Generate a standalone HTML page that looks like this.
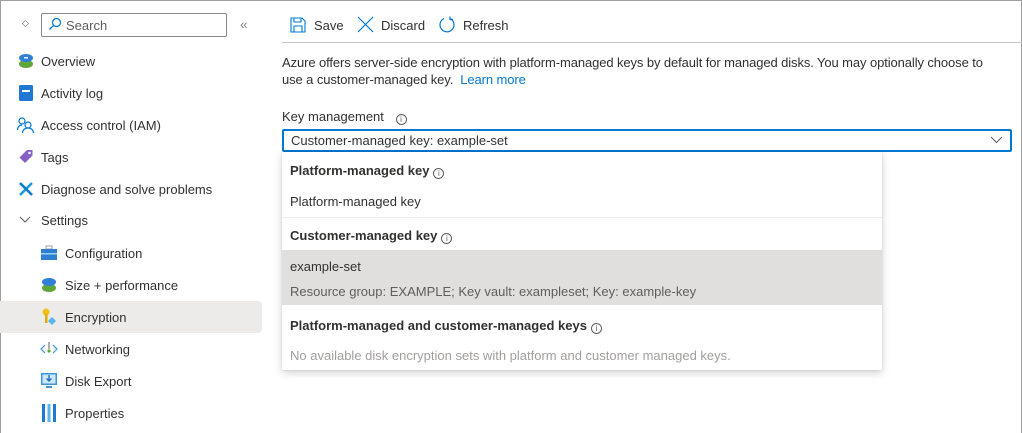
<!DOCTYPE html>
<html><head><meta charset="utf-8"><style>
*{box-sizing:border-box;margin:0;padding:0}
body{width:1022px;height:433px;overflow:hidden;background:#fff;font-family:"Liberation Sans",Arial,sans-serif;font-size:13px;color:#323130;position:relative}
.frame{position:absolute;left:0;top:0;width:1022px;height:433px;border:1px solid #a19f9d;border-bottom:none}
.a{position:absolute;white-space:nowrap}
.ic{position:absolute}
.nav{position:absolute;left:0;height:32px;line-height:34px;white-space:nowrap}
.sel{background:#edebe9;border-radius:0 4px 4px 0}
.b{font-weight:bold}
.info{display:inline-block;width:11px;height:11px;border:1px solid #605e5c;border-radius:50%;font-size:8px;line-height:9px;text-align:center;color:#605e5c;vertical-align:-1px;margin-left:4px;font-weight:normal}
</style></head><body>
<div class="frame"></div>
<div class="a" style="left:22px;top:18px;font-size:9px;color:#605e5c">◇</div>
<div class="a" style="left:41px;top:13px;width:186px;height:24px;border:1px solid #8a8886;border-radius:2px"></div>
<svg class="ic" style="left:48px;top:17px" width="14" height="14" viewBox="0 0 14 14"><circle cx="8.5" cy="5.5" r="4" fill="none" stroke="#0078d4" stroke-width="1.2"/><path d="M5.6 8.4L1.5 12.5" stroke="#0078d4" stroke-width="1.3"/></svg>
<div class="a" style="left:66px;top:18px;color:#605e5c">Search</div>
<div class="a" style="left:240px;top:16px;color:#8a8886;font-size:14px">«</div>

<svg class="ic" style="left:18px;top:53px" width="16" height="16"><ellipse cx="8" cy="11" rx="7" ry="4" fill="#5ea53a"/><ellipse cx="8" cy="5" rx="7" ry="4" fill="#2f7fd6"/><rect x="6" y="4" width="4" height="1.5" fill="#fff"/></svg>
<div class="nav" style="top:45px;left:41px">Overview</div>
<svg class="ic" style="left:18px;top:85px" width="16" height="16"><rect x="1" y="0" width="14" height="16" rx="1.5" fill="#1f78d1"/><rect x="4" y="5" width="8" height="2" fill="#fff"/></svg>
<div class="nav" style="top:77px;left:41px">Activity log</div>
<svg class="ic" style="left:17px;top:117px" width="18" height="16" fill="none" stroke="#0078d4" stroke-width="1.2"><circle cx="5" cy="4" r="3"/><path d="M0.5 13c0-3 2-5 4.5-5"/><circle cx="11" cy="8" r="3"/><path d="M5.5 16c0-3 2.5-5 5.5-5s5.5 2 5.5 5"/></svg>
<div class="nav" style="top:109px;left:41px">Access control (IAM)</div>
<svg class="ic" style="left:18px;top:149px" width="16" height="16"><path d="M9 1h5.5v5.5L7 14 1.5 8.5z" fill="#8661c5"/><circle cx="11.5" cy="4" r="1.3" fill="#fff"/></svg>
<div class="nav" style="top:141px;left:41px">Tags</div>
<svg class="ic" style="left:18px;top:181px" width="16" height="16" stroke-width="2.6"><path d="M2 14L14 2" stroke="#1f9ad6"/><path d="M2 2L14 14" stroke="#0a7cc8"/></svg>
<div class="nav" style="top:173px;left:41px">Diagnose and solve problems</div>
<svg class="ic" style="left:19px;top:216px" width="12" height="8" fill="none" stroke="#605e5c"><path d="M1 1l5 5 5-5"/></svg>
<div class="nav" style="top:204px;left:41px">Settings</div>
<svg class="ic" style="left:41px;top:245px" width="16" height="16"><rect x="5" y="1" width="6" height="3" fill="none" stroke="#a0a0a0"/><rect x="0" y="4" width="16" height="11" fill="#2d7fd1"/><rect x="0" y="8" width="16" height="1.5" fill="#9cd0f5"/></svg>
<div class="nav" style="top:237px;left:65px">Configuration</div>
<svg class="ic" style="left:41px;top:277px" width="16" height="16"><ellipse cx="8" cy="11" rx="7" ry="4" fill="#5ea53a"/><ellipse cx="8" cy="5" rx="7" ry="4" fill="#2f7fd6"/></svg>
<div class="nav" style="top:269px;left:65px">Size + performance</div>
<div class="nav sel" style="top:301px;width:262px"></div>
<svg class="ic" style="left:41px;top:308px" width="16" height="17"><circle cx="5" cy="4" r="3.5" fill="#f3c11c"/><rect x="4" y="6" width="2.5" height="9" fill="#e0a800"/><path d="M11 9l4 4-4 4-4-4z" fill="#5ab4e8"/></svg>
<div class="nav" style="top:301px;left:65px">Encryption</div>
<svg class="ic" style="left:40px;top:340px" width="18" height="18" fill="none" stroke="#3a96dd" stroke-width="1.2"><path d="M5 5L1 9l4 4M13 5l4 4-4 4"/><path d="M9 2v7" stroke="#777"/><circle cx="9" cy="11" r="1.6" fill="#5ea53a" stroke="none"/></svg>
<div class="nav" style="top:333px;left:65px">Networking</div>
<svg class="ic" style="left:41px;top:373px" width="16" height="16"><rect x="0" y="0" width="16" height="12" fill="#3a96dd"/><rect x="1.5" y="1.5" width="13" height="9" fill="#cde7fa"/><path d="M8 2v6M5.5 5.5L8 8l2.5-2.5" stroke="#1f6fc0" stroke-width="1.4" fill="none"/><rect x="5" y="13" width="6" height="2" fill="#3a96dd"/></svg>
<div class="nav" style="top:365px;left:65px">Disk Export</div>
<svg class="ic" style="left:42px;top:404px" width="14" height="18"><rect x="0" y="0" width="3" height="18" fill="#1f78d1"/><rect x="5.5" y="0" width="3" height="18" fill="#5ab4e8"/><rect x="11" y="0" width="3" height="18" fill="#1f78d1"/></svg>
<div class="nav" style="top:397px;left:65px">Properties</div>

<svg class="ic" style="left:290px;top:17px" width="16" height="16" fill="none" stroke="#0078d4" stroke-width="1.1"><path d="M1 1h11l3 3v11H1z"/><path d="M4 1v4h7V1M4 15v-6h8v6"/></svg>
<div class="a" style="left:314px;top:18px">Save</div>
<svg class="ic" style="left:357px;top:16px" width="17" height="17" stroke="#0078d4" stroke-width="1.2"><path d="M1 1l15 15M16 1L1 16"/></svg>
<div class="a" style="left:381px;top:18px">Discard</div>
<svg class="ic" style="left:438px;top:16px" width="18" height="18" fill="none" stroke="#0078d4" stroke-width="1.2"><path d="M6 2.5A7 7 0 1 0 12 2.5"/><path d="M12 0.5v3h3"/></svg>
<div class="a" style="left:463px;top:18px">Refresh</div>
<div class="a" style="left:282px;top:42px;width:740px;height:1px;background:#c8c6c4"></div>

<div class="a" style="left:282px;top:55px;letter-spacing:-0.1px">Azure offers server-side encryption with platform-managed keys by default for managed disks. You may optionally choose to</div>
<div class="a" style="left:282px;top:72px;letter-spacing:-0.1px">use a customer-managed key. &nbsp;<span style="color:#0078d4">Learn more</span></div>
<div class="a" style="left:282px;top:109px">Key management <span class="info" style="margin-left:8px">i</span></div>
<div class="a" style="left:282px;top:129px;width:730px;height:23px;border:2px solid #0078d4;border-radius:2px"></div>
<div class="a" style="left:291px;top:133px">Customer-managed key: example-set</div>
<svg class="ic" style="left:990px;top:136px" width="13" height="8" fill="none" stroke="#605e5c"><path d="M1 1l5.5 5.5L12 1"/></svg>

<div class="a" style="left:282px;top:152px;width:600px;height:218px;background:#fff;box-shadow:0 3px 8px rgba(0,0,0,.18),0 0 2px rgba(0,0,0,.1)"></div>
<div class="a b" style="left:290px;top:163px">Platform-managed key<span class="info">i</span></div>
<div class="a" style="left:290px;top:194px">Platform-managed key</div>
<div class="a" style="left:282px;top:217px;width:600px;height:1px;background:#edebe9"></div>
<div class="a b" style="left:290px;top:228px">Customer-managed key<span class="info">i</span></div>
<div class="a" style="left:282px;top:250px;width:600px;height:55px;background:#e1dfdd"></div>
<div class="a" style="left:290px;top:259px">example-set</div>
<div class="a" style="left:290px;top:284px;color:#605e5c">Resource group: EXAMPLE; Key vault: exampleset; Key: example-key</div>
<div class="a b" style="left:290px;top:318px">Platform-managed and customer-managed keys<span class="info">i</span></div>
<div class="a" style="left:290px;top:348px;color:#a19f9d">No available disk encryption sets with platform and customer managed keys.</div>
</body></html>
